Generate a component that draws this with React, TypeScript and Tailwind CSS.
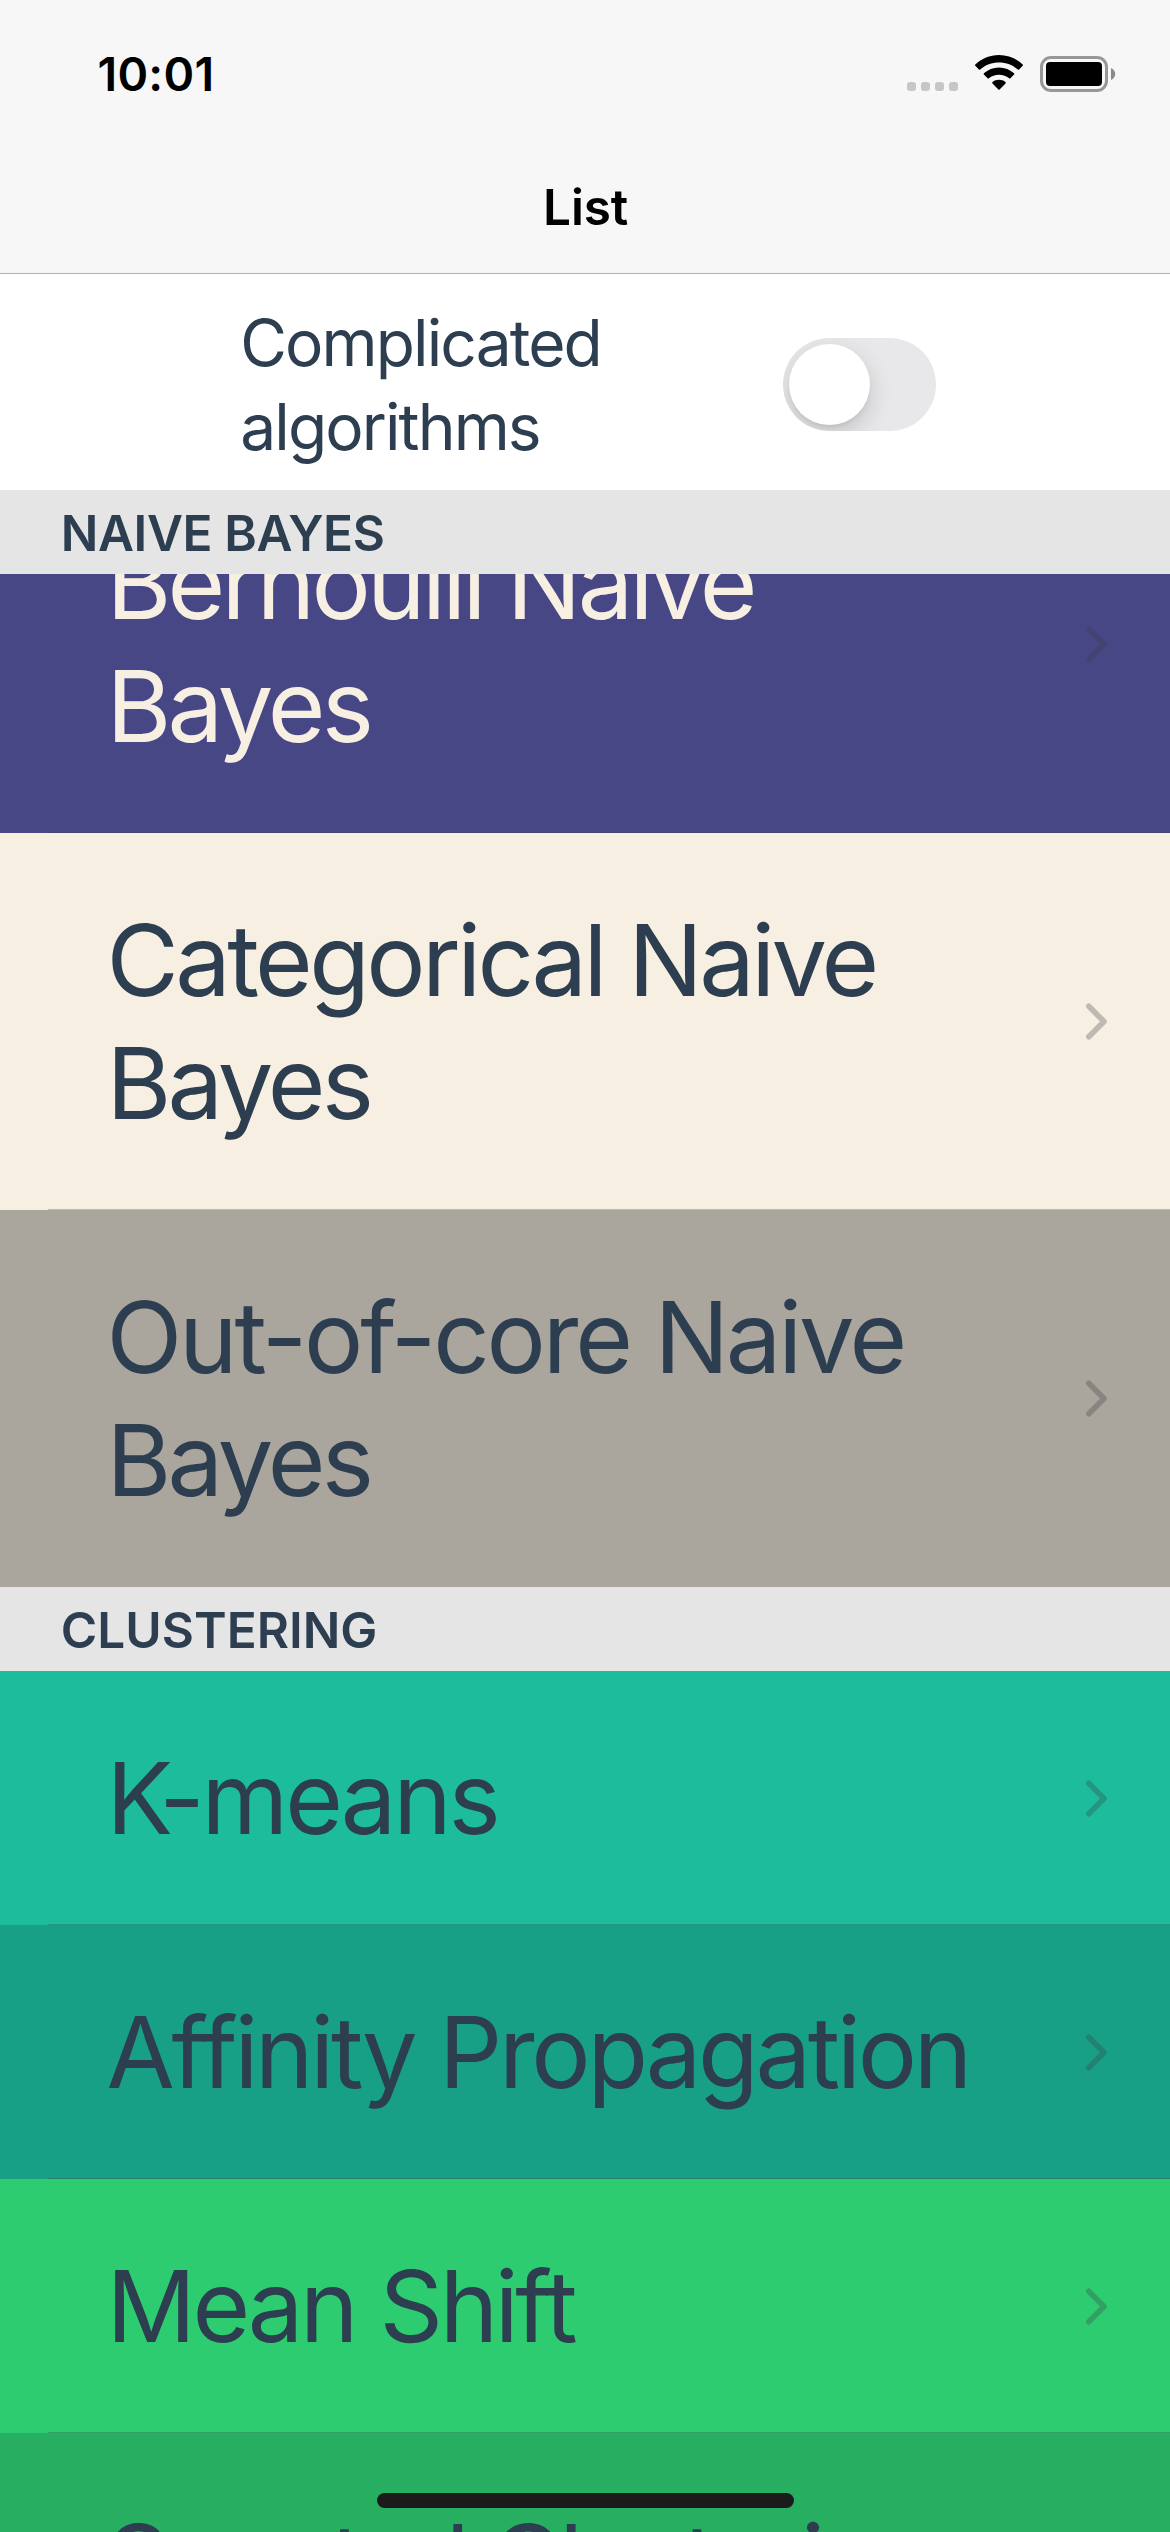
import React from "react";

type Row = { lines: string[]; bg: string; tracking: string[]; color?: string };

const naiveBayes: Row[] = [
  { lines: ["Bernoulli Naive", "Bayes"], bg: "bg-[#484786]", color: "text-[#f7f0e2]", tracking: ["tracking-[-3.72px]", "tracking-[-3.8px]"] },
  { lines: ["Categorical Naive", "Bayes"], bg: "bg-[#f7f0e2]", tracking: ["tracking-[-3.6px]", "tracking-[-3.8px]"] },
  { lines: ["Out-of-core Naive", "Bayes"], bg: "bg-[#aaa59d]", tracking: ["tracking-[-3.18px]", "tracking-[-3.8px]"] },
];

const clustering: Row[] = [
  { lines: ["K-means"], bg: "bg-[#1cbc9c]", tracking: ["tracking-[-3.14px]"] },
  { lines: ["Affinity Propagation"], bg: "bg-[#17a086]", tracking: ["tracking-[-3.27px]"] },
  { lines: ["Mean Shift"], bg: "bg-[#2ecc71]", tracking: ["tracking-[-3.4px]"] },
  { lines: ["Spectral Clustering"], bg: "bg-[#28ae60]", tracking: ["tracking-[-3.5px]"] },
];

function StatusBar() {
  return (
    <div className="flex h-[141px] items-start justify-between pl-[97.5px] pr-[54px]">
      <span className="mt-[46px] text-[46.5px] leading-[56px] font-semibold tracking-[0.26px] text-black">10:01</span>
      <div className="mt-[55px] flex h-[37px] items-start">
        <div className="mt-[27px] flex gap-[5px]">
          {[0, 1, 2, 3].map((n) => (
            <span key={n} className="h-[9px] w-[9px] rounded-[3px] bg-[#c6c6c6]" />
          ))}
        </div>
        <svg className="ml-[17px] h-[36px] w-[48px]" viewBox="0 0 48 36">
          <path d="M24 0C33.2 0 41.5 3.6 47.7 9.5c.4.4.4.9 0 1.3l-3.6 3.7c-.4.4-.9.4-1.3 0C37.800 9.900 31.200 7.500 24 7.500S10.200 9.900 5.200 14.500c-.4.4-.9.4-1.300 0L.3 10.800c-.4-.4-.4-.9 0-1.300C6.500 3.600 14.800 0 24 0Z" />
          <path d="M24 12.400c5.800 0 11.100 2.200 15.100 5.900.4.4.4.9 0 1.300l-3.700 3.700c-.4.4-.9.4-1.300 0-2.700-2.300-6.200-3.600-10.100-3.600s-7.400 1.300-10.100 3.600c-.4.4-.9.4-1.300 0l-3.700-3.700c-.4-.4-.4-.9 0-1.300C12.900 14.600 18.200 12.400 24 12.400Z" />
          <path d="M24 24.800c2.500 0 4.700.8 6.500 2.300.4.4.4.9 0 1.300l-5.900 6c-.4.400-.8.400-1.200 0l-5.900-6c-.4-.4-.4-.9 0-1.300 1.800-1.500 4-2.300 6.500-2.300Z" />
        </svg>
        <svg className="ml-[17px] h-[36px] w-[76px] translate-y-px" viewBox="0 0 76 36">
          <rect x="1.500" y="1.500" width="65" height="33" rx="9.500" fill="none" stroke="#979797" strokeWidth="3" />
          <rect x="6" y="6" width="56" height="24" rx="4" fill="#000" />
          <path d="M71 12c2.500 1 4.200 3.400 4.200 6s-1.700 5-4.200 6Z" fill="#8a8a8a" />
        </svg>
      </div>
    </div>
  );
}

function SectionHeader({ title, tracking }: { title: string; tracking: string }) {
  return (
    <h2 className={`h-[84px] shrink-0 bg-[#e5e5e5] pt-[13px] pl-[60.8px] text-[49.5px] leading-[60px] font-semibold text-[#2c3e50] ${tracking}`}>
      {title}
    </h2>
  );
}

function ListRow({ row, last }: { row: Row; last: boolean }) {
  return (
    <li className={`relative flex shrink-0 items-center justify-between pt-[66px] pr-[62px] pb-[65px] pl-[106.5px] ${row.bg}`}>
      <div className={`text-[99px] leading-[123px] whitespace-nowrap ${row.color ?? "text-[#2c3e50]"}`}>
        {row.lines.map((line, i) => (
          <p key={line} className={row.tracking[i]}>{line}</p>
        ))}
      </div>
      <svg className="-mt-px h-[37px] w-[22px]" viewBox="0 0 22 37">
        <path d="M2.800 3.300 18 18.500 2.800 33.700" fill="none" stroke="#3c3c43" strokeOpacity="0.3" strokeWidth="5.600" strokeLinecap="round" strokeLinejoin="round" />
      </svg>
      {!last && <span className="absolute right-0 bottom-0 left-[48px] h-px bg-[#3c3c43]/30" />}
    </li>
  );
}

function Rows({ rows }: { rows: Row[] }) {
  return (
    <ul className="flex shrink-0 flex-col">
      {rows.map((row, i) => (
        <ListRow key={row.lines[0]} row={row} last={i === rows.length - 1} />
      ))}
    </ul>
  );
}

export default function App() {
  return (
    <main className="relative flex h-[2532px] w-[1170px] flex-col overflow-hidden bg-white font-['Inter',sans-serif]">
      <header className="h-[274px] shrink-0 border-b border-[#b2b2b2] bg-[#f7f7f7]">
        <StatusBar />
        <h1 className="pt-[36px] pl-px text-center text-[49.5px] leading-[60px] font-semibold tracking-[-0.2px] text-black">List</h1>
      </header>

      <section className="flex h-[216px] shrink-0 items-start justify-between pr-[234px] pl-[240.2px]">
        <p className="mt-[27px] text-[64px] leading-[84px] tracking-[-1.87px] text-[#2c3e50]">
          Complicated
          <br />
          algorithms
        </p>
        <button
          role="switch"
          aria-checked={false}
          aria-label="Complicated algorithms"
          className="mt-[64px] flex h-[93px] w-[153px] items-center overflow-hidden rounded-full bg-[#e8e8ea] pl-[6px]"
        >
          <span className="h-[81px] w-[81px] rounded-full bg-white shadow-[0_9px_24px_rgba(0,0,0,0.16),0_3px_3px_rgba(0,0,0,0.05)]" />
        </button>
      </section>

      <SectionHeader title="NAIVE BAYES" tracking="tracking-[-0.4px]" />
      {/* The first section is scrolled partway under its pinned header. */}
      <div className="flex h-[1013px] shrink-0 flex-col justify-end overflow-hidden">
        <Rows rows={naiveBayes} />
      </div>
      <SectionHeader title="CLUSTERING" tracking="tracking-[0.03px]" />
      <Rows rows={clustering} />

      <div className="absolute bottom-[24px] left-[377px] h-[15px] w-[417px] rounded-full bg-[#1b1b1b]" />
    </main>
  );
}
